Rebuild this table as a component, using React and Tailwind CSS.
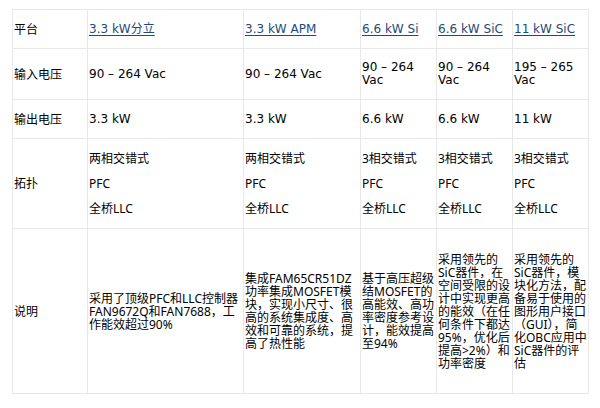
const FONT = { fontFamily: '"DejaVu Sans", Verdana, "Noto Sans CJK SC", sans-serif' };
const CJK = { fontFamily: '"Noto Sans", "Noto Sans CJK SC", "Microsoft YaHei", sans-serif' };

const COLS = ['w-[75px]', 'w-[156px]', 'w-[117px]', 'w-[76px]', 'w-[76px]', 'w-[76px]'];

const PLATFORMS = ['3.3 kW分立', '3.3 kW APM', '6.6 kW Si', '6.6 kW SiC', '11 kW SiC'];
const VOLTAGES = ['90 – 264 Vac', '90 – 264 Vac', '90 – 264 Vac', '90 – 264 Vac', '195 – 265 Vac'];
const POWERS = ['3.3 kW', '3.3 kW', '6.6 kW', '6.6 kW', '11 kW'];
const TOPOLOGY = [
  ['两相交错式', 'PFC', '全桥LLC'],
  ['两相交错式', 'PFC', '全桥LLC'],
  ['3相交错式', 'PFC', '全桥LLC'],
  ['3相交错式', 'PFC', '全桥LLC'],
  ['3相交错式', 'PFC', '全桥LLC'],
];
const NOTES = [
  '采用了顶级PFC和LLC控制器FAN9672Q和FAN7688，工作能效超过90%',
  '集成FAM65CR51DZ功率集成MOSFET模块，实现小尺寸、很高的系统集成度、高效和可靠的系统，提高了热性能',
  '基于高压超级结MOSFET的高能效、高功率密度参考设计，能效提高至94%',
  '采用领先的SiC器件，在空间受限的设计中实现更高的能效（在任何条件下都达95%，优化后提高>2%）和功率密度',
  '采用领先的SiC器件，模块化方法，配备易于使用的图形用户接口（GUI），简化OBC应用中SiC器件的评估',
];

const cell = 'border border-[#e8e8e8] pl-[1px] pr-0 align-middle text-left font-normal';

export default function App() {
  return (
    <div className="w-[600px] h-[408px] overflow-hidden bg-white text-[12px] leading-[13px] text-black" style={FONT}>
      <div className="pl-[12px] pt-[9px]">
        <table className="table-fixed border-collapse w-[577px]">
          <colgroup>
            {COLS.map((c, i) => <col key={i} className={c} />)}
          </colgroup>
          <tbody>
            <tr className="h-[39px]">
              <td className={cell} style={CJK}>平台</td>
              {PLATFORMS.map(p => (
                <td key={p} className={cell}>
                  <a className="text-[#1e4b7a] underline underline-offset-2">{p}</a>
                </td>
              ))}
            </tr>
            <tr className="h-[51px]">
              <td className={cell} style={CJK}>输入电压</td>
              {VOLTAGES.map((v, i) => <td key={i} className={cell}>{v}</td>)}
            </tr>
            <tr className="h-[39px]">
              <td className={cell} style={CJK}>输出电压</td>
              {POWERS.map((v, i) => <td key={i} className={cell}>{v}</td>)}
            </tr>
            <tr className="h-[90px]">
              <td className={cell} style={CJK}>拓扑</td>
              {TOPOLOGY.map((lines, i) => (
                <td key={i} className={cell} style={CJK}>
                  <div className="flex flex-col gap-[12px]">
                    {lines.map(l => <span key={l}>{l}</span>)}
                  </div>
                </td>
              ))}
            </tr>
            <tr className="h-[165px]">
              <td className={cell} style={CJK}>说明</td>
              {NOTES.map((n, i) => <td key={i} className={cell} style={CJK}>{n}</td>)}
            </tr>
          </tbody>
        </table>
      </div>
      <p className="mt-[18px] text-center" style={CJK}>表1：安森美半导体车载充电器OBC方案</p>
    </div>
  );
}
